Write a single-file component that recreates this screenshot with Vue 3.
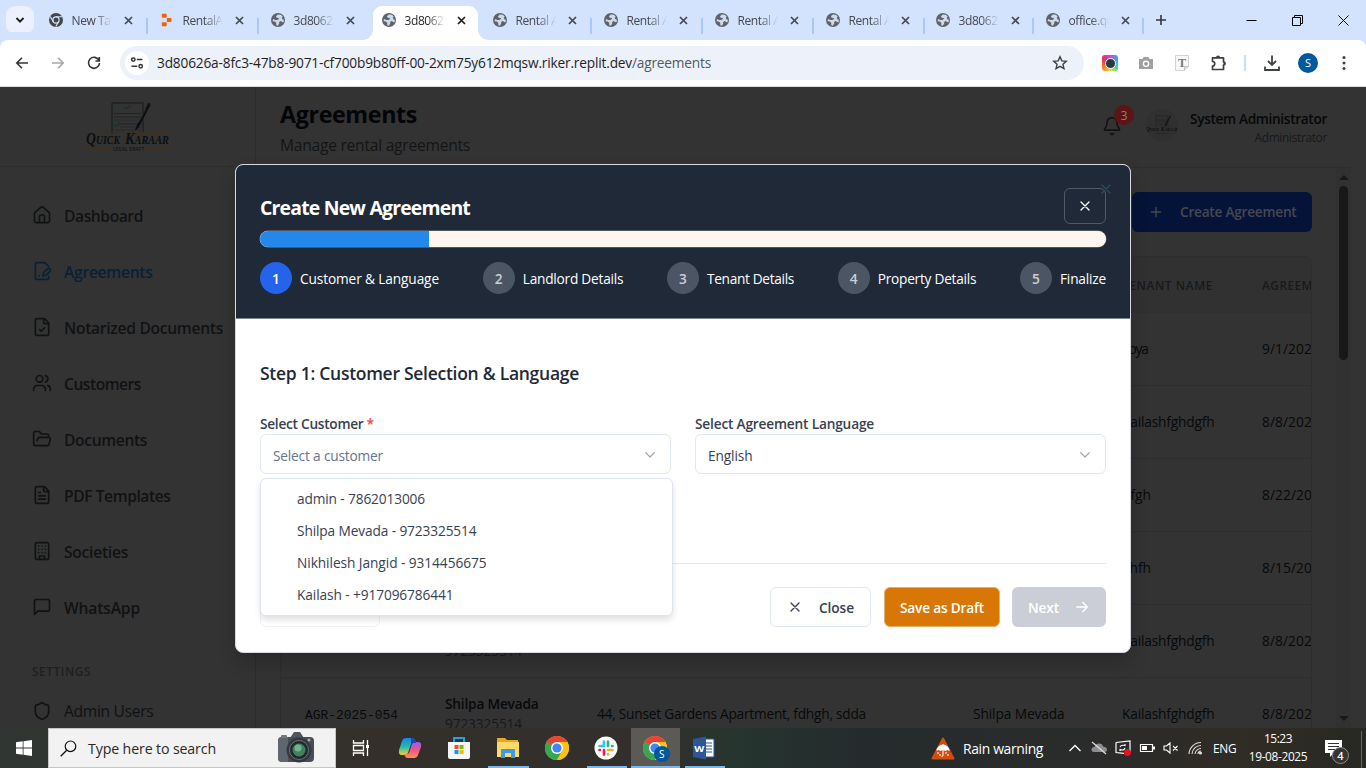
<script setup>
const vFit = {
  mounted(el, { value }) {
    const natural = el.getBoundingClientRect().width
    el.style.letterSpacing = (value - natural) / el.textContent.length + 'px'
  }
}

const tabs = [
  { title: 'New Tab', icon: 'chrome' },
  { title: 'RentalAg', icon: 'replit' },
  { title: '3d80626', icon: 'globe', noSep: true },
  { title: '3d80626', icon: 'globe', active: true, noSep: true },
  { title: 'Rental Ag', icon: 'globe' },
  { title: 'Rental Ag', icon: 'globe' },
  { title: 'Rental Ag', icon: 'globe' },
  { title: 'Rental Ag', icon: 'globe' },
  { title: '3d80626', icon: 'globe', narrow: true },
  { title: 'office.qu', icon: 'globe', narrow: true }
]

const nav = [
  { label: 'Dashboard', w: 79, paths: ['M3 10.5V19a2.200 2.200 0 0 0 2.200 2.200h13.600A2.200 2.200 0 0 0 21 19v-8.500a2.500 2.500 0 0 0-.9-1.900L13.500 2.800a2.300 2.300 0 0 0-3 0L3.900 8.600a2.500 2.500 0 0 0-.9 1.900z', 'M9 21v-8a1 1 0 0 1 1-1h4a1 1 0 0 1 1 1v8'] },
  { label: 'Agreements', w: 88.500, active: true, paths: ['M20 18.500V20a2 2 0 0 1-2 2H6a2 2 0 0 1-2-2V4a2 2 0 0 1 2-2h9.500L20 6.500', 'M8 18h1', 'm18.400 9.600a2 2 0 0 1 3 3L17 17l-4 1 1-4z'] },
  { label: 'Notarized Documents', w: 159, paths: ['M15 2H6a2 2 0 0 0-2 2v16a2 2 0 0 0 2 2h12a2 2 0 0 0 2-2V7z', 'M14 2v4a2 2 0 0 0 2 2h4', 'm9 15 2 2 4-4'] },
  { label: 'Customers', w: 77, paths: ['M16 21v-2a4 4 0 0 0-4-4H6a4 4 0 0 0-4 4v2', 'M9 3a4 4 0 1 0 0 8 4 4 0 0 0 0-8', 'M22 21v-2a4 4 0 0 0-3-3.870', 'M16 3.130a4 4 0 0 1 0 7.750'] },
  { label: 'Documents', w: 83, paths: ['m6 14 1.500-2.900A2 2 0 0 1 9.240 10H20a2 2 0 0 1 1.940 2.500l-1.540 6a2 2 0 0 1-1.950 1.500H4a2 2 0 0 1-2-2V5a2 2 0 0 1 2-2h3.900a2 2 0 0 1 1.690.900l.810 1.200a2 2 0 0 0 1.670.900H18a2 2 0 0 1 2 2v2'] },
  { label: 'PDF Templates', w: 106.500, paths: ['M15 2H6a2 2 0 0 0-2 2v16a2 2 0 0 0 2 2h12a2 2 0 0 0 2-2V7z', 'M14 2v4a2 2 0 0 0 2 2h4', 'M10 9H8', 'M16 13H8', 'M16 17H8'] },
  { label: 'Societies', w: 64, paths: ['M6 2h12a2 2 0 0 1 2 2v16a2 2 0 0 1-2 2H6a2 2 0 0 1-2-2V4a2 2 0 0 1 2-2z', 'M9 22v-4h6v4', 'M8 6h.01M12 6h.01M16 6h.01M8 10h.01M12 10h.01M16 10h.01M8 14h.01M12 14h.01M16 14h.01'] },
  { label: 'WhatsApp', w: 76, paths: ['M21 15a2 2 0 0 1-2 2H7l-4 4V5a2 2 0 0 1 2-2h14a2 2 0 0 1 2 2z'] }
]

const rows = [
  { tenant: 'Zoya', w: 25.500, date: '9/1/2025' },
  { tenant: 'Kailashfghdgfh', w: 92.500, date: '8/8/2025' },
  { tenant: 'dfgh', w: 29, date: '8/22/2025' },
  { tenant: 'ghfh', w: 29, date: '8/15/2025' },
  { tenant: 'Kailashfghdgfh', w: 92.500, date: '8/8/2025', phone: '9723325514' },
  { tenant: 'Kailashfghdgfh', w: 92.500, date: '8/8/2025', phone: '9723325514', id: 'AGR-2025-054', customer: 'Shilpa Mevada', address: '44, Sunset Gardens Apartment, fdhgh, sdda', landlord: 'Shilpa Mevada' }
]

const steps = [
  { label: 'Customer & Language', w: 139 },
  { label: 'Landlord Details', w: 100.500 },
  { label: 'Tenant Details', w: 87 },
  { label: 'Property Details', w: 98.500 },
  { label: 'Finalize', w: 46 }
]

const customers = [
  { label: 'admin - 7862013006', w: 128 },
  { label: 'Shilpa Mevada - 9723325514', w: 179.500 },
  { label: 'Nikhilesh Jangid - 9314456675', w: 189.500 },
  { label: 'Kailash - +917096786441', w: 156.500 }
]
</script>

<template>
  <div class="screen">
    <svg class="defs" width="0" height="0" aria-hidden="true">
      <symbol id="globe" viewBox="0 0 14 14">
        <circle cx="7" cy="7" r="7" fill="#5f6368" />
        <path d="M6.700 1.400 4.900 3.600l.9 1.200 1.900.1.300 1.200-1.900.9H4.300L2.200 6 1.500 8.200l2.300.2 1.400 1.400.1 2.500 1.500.4 1.500-2.200-.2-1.500 1.600-1 1.900 1.200 1.100-.3.100-2.200-1.400-.4-.6-1.500.9-1.300-1.900-1.700z" fill="#d9e5fb" opacity=".9" />
      </symbol>
      <symbol id="x" viewBox="0 0 24 24"><path d="M18 6 6 18M6 6l12 12" fill="none" stroke="currentColor" stroke-width="2" stroke-linecap="round" /></symbol>
      <symbol id="logo" viewBox="0 0 84 50">
        <path d="M26 32V1h31v30" fill="none" stroke="#17191b" stroke-width="1" />
        <path d="M28 11.500h27M28 15h27M34 22h21" stroke="#202224" stroke-width="1.200" />
        <path d="M28 18h27M34 25h21M28 28h27" stroke="#2a2b2c" stroke-width="1" />
        <path d="m38 5 2 2 4-3.500M28 22.500l2 2 4-4" fill="none" stroke="#17361d" stroke-width="1.300" />
        <path d="M63 1 51 24l-1.500 4 3-3L64 3z" fill="#080d14" stroke="#0b1018" stroke-width="1" />
        <path d="m60 7-7 13" stroke="#392b19" stroke-width=".8" />
        <path d="M12 30h37M51 30.500h33M0 46.500h25M60 46.500h24" stroke="#3d301e" stroke-width="1" />
        <text x="0" y="42" textLength="34" lengthAdjust="spacingAndGlyphs" class="brand"><tspan font-size="16">Q</tspan><tspan font-size="11.500">UICK</tspan></text>
        <text x="39" y="42" textLength="44" lengthAdjust="spacingAndGlyphs" class="brand"><tspan font-size="16">K</tspan><tspan font-size="11.500">ARAAR</tspan></text>
        <text x="27" y="48.500" textLength="31" class="brand-sub">LEGAL DRAFT</text>
      </symbol>
      <symbol id="chrome" viewBox="0 0 24 24">
        <circle cx="12" cy="12" r="12" fill="#fbc116" />
        <path d="M12 12 1.600 6A12 12 0 0 1 22.400 6H12z" fill="#ea4335" />
        <path d="M1.600 6A12 12 0 0 0 12 24l5.200-9L12 12 6.800 15z" fill="#34a853" />
        <path d="M1.600 6 6.800 15 12 12V6z" fill="#ea4335" />
        <path d="M1.600 6 6.800 15l3-2-3-5z" fill="#34a853" />
        <path d="M22.400 6A12 12 0 0 1 12 24l5.200-9V6z" fill="#fbc116" />
        <circle cx="12" cy="12" r="6" fill="#fff" /><circle cx="12" cy="12" r="4.600" fill="#4285f4" />
      </symbol>
    </svg>

    <div class="tabstrip">
      <div class="tab-search"><svg width="10" height="10" viewBox="0 0 10 10"><path d="m1.500 3 3.500 3.700L8.500 3" fill="none" stroke="#1f1f1f" stroke-width="1.900" /></svg></div>
      <div v-for="(t, i) in tabs" :key="i" class="tab" :class="{ active: t.active, narrow: t.narrow }">
        <svg v-if="t.icon === 'globe'" width="14" height="14"><use href="#globe" /></svg>
        <svg v-else-if="t.icon === 'chrome'" width="14" height="14" viewBox="0 0 14 14"><circle cx="7" cy="7" r="7" fill="#444746" /><circle cx="7" cy="7" r="3.100" fill="#444746" stroke="#d3e2fd" stroke-width="1.200" /><path d="M7 3.800h6M4.200 8.600 1.200 3.500M9.700 8.600 6.800 13.500" stroke="#d3e2fd" stroke-width="1.100" /></svg>
        <svg v-else width="14" height="14" viewBox="0 0 14 14"><path d="M2.500 1.500H6V4H2.500zM2.500 10H6v2.500H2.500zM7.500 5.700h3.300v2.600H7.500z" fill="#f26207" stroke="#f26207" stroke-width="1.400" stroke-linejoin="round" /></svg>
        <span class="tab-title">{{ t.title }}</span>
        <svg class="tab-x" width="9" height="9" viewBox="0 0 9 9"><path d="m1 1 7 7M8 1 1 8" stroke="currentColor" stroke-width="1.700" /></svg>
        <i v-if="!t.noSep" class="tab-sep" />
      </div>
      <svg class="new-tab" width="12" height="12" viewBox="0 0 12 12"><path d="M6 1v10M1 6h10" stroke="#333638" stroke-width="1.600" /></svg>
      <div class="window-buttons">
        <svg width="11" height="11" viewBox="0 0 11 11"><path d="M.5 5.500h10" stroke="#000" /></svg>
        <svg width="11" height="11" viewBox="0 0 11 11"><path d="M.5 2.500h8v8h-8zM2.500 2.500v-2h8v8h-2" fill="none" stroke="#000" /></svg>
        <svg width="11" height="11" viewBox="0 0 11 11"><path d="m.5.5 10 10m0-10-10 10" stroke="#000" /></svg>
      </div>
    </div>

    <div class="toolbar">
      <svg class="tb" width="16" height="16" viewBox="0 0 16 16"><path d="M14 8H3M8 2.800 2.800 8 8 13.200" fill="none" stroke="#333638" stroke-width="1.600" /></svg>
      <svg class="tb" width="16" height="16" viewBox="0 0 16 16"><path d="M2 8h11M8 2.800 13.200 8 8 13.200" fill="none" stroke="#a6a8aa" stroke-width="1.600" /></svg>
      <svg class="tb" width="16" height="16" viewBox="0 0 16 16"><path d="M13 5.500A5.500 5.500 0 1 0 13.500 8M13.300 2v4H9.500" fill="none" stroke="#333638" stroke-width="1.600" /></svg>
      <div class="omnibox">
        <span class="site-info"><svg width="14" height="14" viewBox="0 0 14 14" fill="none" stroke="#333638" stroke-width="1.500"><circle cx="3.300" cy="3.600" r="1.700" /><path d="M6.800 3.600h5.700M1.500 10.300h5.700" /><circle cx="10.700" cy="10.300" r="1.700" /></svg></span>
        <span v-fit="475" class="fit url">3d80626a-8fc3-47b8-9071-cf700b9b80ff-00-2xm75y612mqsw.riker.replit.dev</span><span v-fit="79" class="fit url path">/agreements</span>
        <svg class="star" width="16" height="16" viewBox="0 0 16 16"><path d="m8 1.800 1.850 4.100 4.450.4-3.350 3 1 4.400L8 11.400l-3.950 2.300 1-4.400-3.350-3 4.450-.4z" fill="none" stroke="#3c4043" stroke-width="1.400" /></svg>
      </div>
      <div class="extensions">
        <span class="rainbow"><i /></span>
        <svg width="16" height="16" viewBox="0 0 16 16"><path d="M1 4h3.500l1.200-2h4.600l1.200 2H15v10H1z" fill="#a0a0a0" /><circle cx="8" cy="8.800" r="3.300" fill="#fff" /><circle cx="8" cy="8.800" r="1.900" fill="#999" /></svg>
        <svg width="16" height="16" viewBox="0 0 16 16"><path d="M1.500.5h13v11l-4 4h-9z" fill="#f7f7f7" stroke="#d2d2d2" /><path d="M10.500 15.500v-4h4" fill="#ddd" stroke="#c4c4c4" /><text x="8" y="12" text-anchor="middle" class="t-glyph">T</text></svg>
        <svg width="18" height="18" viewBox="0 0 18 18"><path d="M2.500 3.800h11V8a1.500 1.500 0 0 1 0 3v4.500h-11V12a2 2 0 0 0 0-4.500z" fill="none" stroke="#3c4043" stroke-width="1.700" stroke-linejoin="round" /><path d="M6 3.500a2 2 0 0 1 4 0M13.500 7.500a2 2 0 0 1 0 4" fill="#3c4043" /></svg>
      </div>
      <i class="tb-sep" />
      <svg class="dl" width="16" height="16" viewBox="0 0 16 16"><path d="M8 .5v9M4 6l4 4 4-4M1 11.500V15h14v-3.500" fill="none" stroke="#3c4043" stroke-width="1.800" /></svg>
      <span class="profile">S</span>
      <svg class="dots" width="4" height="16" viewBox="0 0 4 16" fill="#3c4043"><circle cx="2" cy="2.500" r="1.500" /><circle cx="2" cy="8" r="1.500" /><circle cx="2" cy="13.500" r="1.500" /></svg>
    </div>

    <div class="page">
      <aside class="sidebar">
        <div class="brand-box"><svg width="84" height="50"><use href="#logo" /></svg></div>
        <nav>
          <a v-for="n in nav" :key="n.label" :class="{ active: n.active }">
            <svg width="20" height="20" viewBox="0 0 24 24"><path v-for="(p, i) in n.paths" :key="i" :d="p" /></svg>
            <span v-fit="n.w" class="fit">{{ n.label }}</span>
          </a>
        </nav>
        <div class="section"><span v-fit="59" class="fit">SETTINGS</span></div>
        <a class="admin"><svg width="20" height="20" viewBox="0 0 24 24"><path d="M20 13c0 5-3.500 7.500-7.660 8.950a1 1 0 0 1-.67-.01C7.500 20.500 4 18 4 13V6a1 1 0 0 1 1-1c2 0 4.500-1.200 6.240-2.720a1.170 1.170 0 0 1 1.520 0C14.510 3.810 17 5 19 5a1 1 0 0 1 1 1z" /></svg><span v-fit="89.500" class="fit">Admin Users</span></a>
      </aside>

      <div class="main">
        <header class="topbar">
          <div class="titles"><h1 v-fit="137" class="fit">Agreements</h1><p v-fit="190" class="fit">Manage rental agreements</p></div>
          <div class="bell">
            <svg width="20" height="20" viewBox="0 0 24 24"><path d="M10.270 21a2 2 0 0 0 3.460 0M3.260 15.330A1 1 0 0 0 4 17h16a1 1 0 0 0 .74-1.670C19.410 13.960 18 12.500 18 8A6 6 0 0 0 6 8c0 4.500-1.410 5.960-2.740 7.330" /></svg>
            <b>3</b>
          </div>
          <div class="avatar"><svg width="32" height="20"><use href="#logo" /></svg></div>
          <div class="user"><strong v-fit="137" class="fit">System Administrator</strong><span v-fit="72.500" class="fit">Administrator</span></div>
        </header>
        <div class="content">
          <div class="actions"><button class="create"><svg width="16" height="16" viewBox="0 0 24 24"><path d="M5 12h14M12 5v14" /></svg><span v-fit="116.500" class="fit">Create Agreement</span></button></div>
          <div class="table">
            <div class="tr th"><span /><span /><span /><span /><span v-fit="91" class="fit">TENANT NAME</span><span v-fit="75" class="fit">AGREEMENT</span></div>
            <div v-for="(r, i) in rows" :key="i" class="tr">
              <span><span v-if="r.id" v-fit="93" class="fit mono">{{ r.id }}</span></span>
              <span class="cust"><strong v-if="r.customer" v-fit="93.500" class="fit">{{ r.customer }}</strong><span v-if="r.phone" v-fit="77" class="fit phone">{{ r.phone }}</span></span>
              <span><span v-if="r.address" v-fit="269" class="fit">{{ r.address }}</span></span>
              <span><span v-if="r.landlord" v-fit="91.500" class="fit">{{ r.landlord }}</span></span>
              <span v-fit="r.w" class="fit">{{ r.tenant }}</span>
              <span class="fit date">{{ r.date }}</span>
            </div>
          </div>
        </div>
        <div class="scrollbar"><i class="up" /><i class="thumb" /><i class="down" /></div>
      </div>
    </div>

    <section class="modal">
      <div class="modal-head">
        <div class="modal-title"><h2 v-fit="210" class="fit">Create New Agreement</h2><button><svg width="16" height="16"><use href="#x" /></svg></button></div>
        <div class="progress"><i /></div>
        <div class="steps">
          <div v-for="(s, i) in steps" :key="i" class="step" :class="{ current: i === 0 }"><b>{{ i + 1 }}</b><span v-fit="s.w" class="fit">{{ s.label }}</span></div>
        </div>
        <svg class="ghost-x" width="16" height="16"><use href="#x" /></svg>
      </div>
      <div class="modal-body">
        <h3 v-fit="319" class="fit">Step 1: Customer Selection &amp; Language</h3>
        <div class="fields">
          <div class="field">
            <label><span v-fit="103.500" class="fit">Select Customer</span><em>*</em></label>
            <div class="select placeholder"><span v-fit="110" class="fit">Select a customer</span><svg width="16" height="16" viewBox="0 0 24 24"><path d="m5.500 8.500 6.500 6.500 6.500-6.500" /></svg></div>
            <ul class="menu"><li v-for="c in customers" :key="c.label"><span v-fit="c.w" class="fit">{{ c.label }}</span></li></ul>
          </div>
          <div class="field">
            <label><span v-fit="179" class="fit">Select Agreement Language</span></label>
            <div class="select"><span v-fit="44.500" class="fit">English</span><svg width="16" height="16" viewBox="0 0 24 24"><path d="m5.500 8.500 6.500 6.500 6.500-6.500" /></svg></div>
          </div>
        </div>
        <footer>
          <button class="prev" />
          <button class="close"><svg width="16" height="16"><use href="#x" /></svg><span v-fit="35" class="fit">Close</span></button>
          <button class="save"><span v-fit="84" class="fit">Save as Draft</span></button>
          <button class="next"><span v-fit="31" class="fit">Next</span><svg width="16" height="16" viewBox="0 0 24 24"><path d="M4 12h16M13 5l7 7-7 7" /></svg></button>
        </footer>
      </div>
    </section>

    <div class="taskbar">
      <div class="start"><svg width="16" height="16" viewBox="0 0 16 16"><path d="M0 2.200 6.700 1.300v6.300H0zM7.500 1.200 16 0v7.600H7.500zM0 8.400h6.700v6.300L0 13.800zM7.500 8.400H16V16l-8.500-1.200z" fill="#fff" /></svg></div>
      <div class="search">
        <svg width="17" height="17" viewBox="0 0 17 17"><circle cx="10.500" cy="6.300" r="5.300" fill="none" stroke="#111" stroke-width="1.200" /><path d="m6.700 10.200-6 6" stroke="#111" stroke-width="1.300" /></svg>
        <span v-fit="128" class="fit">Type here to search</span>
        <svg class="camera" width="38" height="34" viewBox="0 0 38 34"><path d="M13 7 17 1h6l4 6z" fill="#50565c" /><rect x="1" y="6" width="36" height="25" rx="4" fill="#484e54" /><path d="M1 10q0-4 4-4h6v25H5q-4 0-4-4z" fill="#5f666d" /><rect x="4" y="4" width="6" height="3" rx="1" fill="#777" /><circle cx="22" cy="19" r="12.500" fill="#343a3f" /><circle cx="22" cy="19" r="9.500" fill="#23292b" stroke="#697176" /><circle cx="22" cy="19" r="6.500" fill="#408260" /><circle cx="21" cy="17" r="3.500" fill="#70b58a" /><circle cx="32" cy="9" r="1.500" fill="#aaa" /></svg>
      </div>
      <div class="apps">
        <span><svg width="18" height="18" viewBox="0 0 18 18" fill="none" stroke="#fff" stroke-width="1.300"><path d="M1.500 1v3h10V1M1.500 17v-3h10v3M1.500 6.500h10v5h-10zM15.500 1v16" /><path d="M14 6h3v3h-3z" fill="#fff" stroke="none" /></svg></span>
        <span><svg width="24" height="24" viewBox="0 0 24 24"><defs><linearGradient id="cpA" x2="0" y2="1"><stop stop-color="#1c83e8" /><stop offset=".5" stop-color="#20b9b0" /><stop offset="1" stop-color="#f4d12c" /></linearGradient><linearGradient id="cpB" x2="0" y2="1"><stop stop-color="#9b5af0" /><stop offset=".5" stop-color="#ee568a" /><stop offset="1" stop-color="#ff914a" /></linearGradient></defs><path d="M8 2h6q3 0 4 5h-3q-2 0-3 4l-2 6q-1 2-3 2H4q-4 0-3-5L4 5q1-3 4-3z" fill="url(#cpA)" /><path d="M16 22h-6q-3 0-4-4h3q2 0 3-4l2-6q1-2 3-2h3q4 0 3 5l-3 8q-1 3-4 3z" fill="url(#cpB)" /><path d="M13 2h1q3 0 4 5h-3l-2 2z" fill="#1649b5" /></svg></span>
        <span><svg width="24" height="24" viewBox="0 0 24 24"><path d="M7 7V2h10v5" fill="none" stroke="#1ba4e8" stroke-width="2" /><path d="M1 6h22v15q0 2-2 2H3q-2 0-2-2z" fill="#f4f6f8" /><path d="M7.500 9h4v4h-4z" fill="#f05022" /><path d="M12.500 9h4v4h-4z" fill="#7fba00" /><path d="M7.500 14h4v4h-4z" fill="#00a4ef" /><path d="M12.500 14h4v4h-4z" fill="#ffb900" /></svg></span>
        <span class="open"><svg width="24" height="24" viewBox="0 0 24 24"><path d="M1 2h8l2 2h11v17H1z" fill="#e9a820" /><path d="M1 6h22v15H1z" fill="#ffd968" /><path d="M5 13h14v9h-4v-5H9v5H5z" fill="#3b9be8" /></svg></span>
        <span><svg width="24" height="24"><use href="#chrome" /></svg></span>
        <span class="open"><svg width="24" height="24" viewBox="0 0 24 24"><circle cx="12" cy="12" r="11.500" fill="#fff" /><g fill="none" stroke-width="2.700" stroke-linecap="round"><path d="M10 5.500V10M5.500 10H10" stroke="#36c5f0" /><path d="M14 5.500V10M18.500 10h-.5" stroke="#2eb67d" /><path d="M14 14h4.500M14 18.500v-.5" stroke="#ecb22e" /><path d="M10 14v4.500M5.500 14h.5" stroke="#e01e5a" /></g></svg></span>
        <span class="open focused"><svg width="24" height="24"><use href="#chrome" /></svg><b>S</b></span>
        <span class="open"><svg width="24" height="24" viewBox="0 0 24 24"><path d="M12 3h10v18H12z" fill="#f7f9fc" stroke="#2b579a" /><path d="M14 7h6M14 10h6M14 13h6M14 16h6" stroke="#2b579a" stroke-width="1.200" /><path d="m1 3 13-2.500v23L1 21z" fill="#2b579a" /><text x="2.200" y="15.500" font-size="9.500" font-weight="700" fill="#fff" font-family="Open Sans, sans-serif" textLength="10" lengthAdjust="spacingAndGlyphs">W</text></svg></span>
      </div>
      <div class="weather"><svg width="24" height="23" viewBox="0 0 24 23"><path d="M12 1.500 22.500 21.500h-21z" fill="#cf4f12" stroke="#cf4f12" stroke-width="2" stroke-linejoin="round" /><path d="M5.500 14a6.500 6.500 0 0 1 13 0l-2-1-2 1-2.500-1-2.500 1-2-1z" fill="#fff" /><path d="M12 7v11q0 1.500-1.500 1.500M7 15v2M9 17v2M15 15v2M17 17v2" fill="none" stroke="#fff" /></svg><span v-fit="80" class="fit">Rain warning</span></div>
      <div class="tray">
        <svg viewBox="0 0 18 16"><path d="m3.500 11 5.500-5.500 5.500 5.500" fill="none" stroke="#fff" stroke-width="1.300" /></svg>
        <svg viewBox="0 0 18 16"><path d="M4 12q-3-.5-2.500-3 .5-2 3-2 1-3.500 4.500-3.500T13 6.500q4 .5 4 3t-3 2.500z" fill="#8b8d8f" /><path d="M2 2l14 12" stroke="#ddd" stroke-width="1.300" /></svg>
        <svg viewBox="0 0 18 16"><path d="M2 2.500 16 1v11.500M2 2.500v10l8 .8" fill="none" stroke="#fff" stroke-width="1.200" /><path d="M6 7q1-2.500 5-1.500V4M11 8q-1 3-5 1.500V11" fill="none" stroke="#fff" stroke-width="1.100" /><circle cx="13.500" cy="12.500" r="3.500" fill="#e81123" /></svg>
        <svg viewBox="0 0 18 16"><path d="M2.500 4.500h12v7h-12z" fill="none" stroke="#fff" stroke-width="1.200" /><path d="M4 6h5v4H4zM15 6.500h2v3h-2z" fill="#fff" /></svg>
        <svg viewBox="0 0 18 16"><path d="M2 6h2.500L8 3v10L4.500 10H2zM11 6l4.500 4.500M15.500 6 11 10.500" fill="none" stroke="#fff" stroke-width="1.100" /></svg>
        <svg viewBox="0 0 18 16" fill="none" stroke="#ddd" stroke-width="1.100"><path d="M3 14A12 12 0 0 1 15 2.500M6 14A9 9 0 0 1 15 5.500M9 14a6 6 0 0 1 6-5.500M12 14a3 3 0 0 1 3-3" /><circle cx="14.500" cy="13" r="1" fill="#fff" /></svg>
      </div>
      <div class="lang"><span v-fit="23.500" class="fit">ENG</span></div>
      <div class="clock"><span v-fit="28" class="fit">15:23</span><span v-fit="58.500" class="fit">19-08-2025</span></div>
      <div class="notify"><svg width="17" height="17" viewBox="0 0 17 17"><path d="M0 0h17v13H9l-4 4v-4H0z" fill="#fff" /><path d="M3 3.500h11M3 6.500h11M3 9.500h7" stroke="#333" stroke-width="1.100" /></svg><b>4</b></div>
      <i class="peek" />
    </div>
  </div>
</template>

<style>
html, body { margin: 0; overflow: hidden; }
</style>

<style scoped>
* { box-sizing: border-box; }
.screen { position: relative; width: 1366px; height: 768px; display: flex; flex-direction: column; overflow: hidden; background: #333; font-family: "Open Sans", "Noto Sans", sans-serif; font-size: 13.700px; }
.defs { position: absolute; }
svg { display: block; flex: none; }
i { font-style: normal; display: block; }
button { font: inherit; color: inherit; padding: 0; margin: 0; border: 0; background: none; display: flex; align-items: center; }
h1, h2, h3, p, ul { margin: 0; padding: 0; list-style: none; }
.fit { display: inline-block; white-space: nowrap; flex: none; align-self: center; }

.tabstrip { height: 40px; flex: none; display: flex; align-items: center; background: #d3e2fd; }
.tab-search { width: 28px; height: 28px; margin: 0 3px 0 6px; border-radius: 9px; background: #ebf1fe; display: grid; place-items: center; }
.tab { position: relative; width: 111px; height: 34px; align-self: flex-end; padding: 0 0 0 11.500px; display: flex; align-items: center; color: #45494e; }
.tab > * { margin-top: -6px; }
.tab.narrow { width: 110px; left: -1px; }
.tab-title { width: 40px; margin-left: 9px; overflow: hidden; white-space: nowrap; font-size: 12px; letter-spacing: -.4px; mask-image: linear-gradient(90deg, #000 55%, transparent); }
.tab-x { margin-left: 12.500px; }
.tab-sep { position: absolute; right: 0; top: 12px; width: 2px; height: 16px; margin: 0; background: #a8c7fa; }
.tab.active { color: #1f1f1f; z-index: 1; }
.tab.active::before { content: ""; position: absolute; left: 2.500px; right: 3px; top: 0; height: 34px; margin: 0; border-radius: 9px 9px 0 0; background: #fff; z-index: -1; }
.tab.active::after { content: ""; position: absolute; left: -7.500px; right: -7px; bottom: 0; height: 10px; z-index: -1; background: radial-gradient(circle at 0 0, transparent 9.500px, #fff 10px) left / 10px 10px no-repeat, radial-gradient(circle at 100% 0, transparent 9.500px, #fff 10px) right / 10px 10px no-repeat; }
.new-tab { margin-left: 10px; }
.window-buttons { margin-left: auto; margin-right: 17.500px; display: flex; gap: 35px; }

.toolbar { height: 46px; flex: none; display: flex; align-items: center; background: #fff; padding-left: 14px; border-radius: 8px 8px 0 0; box-shadow: 0 -8px 0 #d3e2fd; }
.tb { margin-right: 20px; }
.omnibox { width: 964px; height: 34px; margin-left: -2px; border-radius: 17px; background: #ecf1fa; display: flex; align-items: center; padding-left: 5px; }
.site-info { width: 24px; height: 24px; border-radius: 50%; background: #fff; display: grid; place-items: center; margin-right: 8px; }
.url { color: #1f1f1f; margin-top: -1px; }
.path { color: #55595e; }
.star { margin-left: auto; margin-right: 16px; }
.extensions { display: flex; align-items: center; margin-left: 18px; gap: 20px; }
.rainbow { width: 16px; height: 16px; border-radius: 3px; display: grid; place-items: center; background: conic-gradient(#d346d8, #36a5f4, #39dd91, #e9db3a, #f57820, #e52f65, #d346d8); }
.rainbow i { width: 11px; height: 11px; border-radius: 50%; background: #283747; border: 1.500px solid #fff; }
.t-glyph { font: 700 12px "Liberation Serif", serif; fill: #777; }
.tb-sep { width: 2px; height: 16px; margin: 0 18px 0 16px; background: #c9dcfb; }
.profile { width: 20px; height: 20px; margin: 0 24px 0 18px; border-radius: 50%; background: #00599c; color: #fff; font-size: 11px; line-height: 20px; text-align: center; }

.page { height: 642px; flex: none; display: flex; border-top: 1px solid #dadcdf; background: #333; color: #101214; }
.sidebar { width: 256px; flex: none; border-right: 1px solid #2d2d2e; overflow: hidden; }
nav svg, .admin svg, .bell svg, .create svg, .select svg, .next svg { fill: none; stroke: currentColor; stroke-width: 2; stroke-linecap: round; stroke-linejoin: round; }
.brand-box { height: 80px; padding-left: 86px; display: flex; align-items: center; border-bottom: 1px solid #2c2d2e; }
.brand { font-family: "Liberation Serif", serif; font-style: italic; font-weight: 700; fill: #0d0e0f; }
.brand-sub { font-family: "Open Sans", sans-serif; font-size: 4.500px; font-weight: 700; fill: #17191a; }
nav { padding-top: 20px; }
nav a { height: 56px; padding-left: 32px; display: flex; align-items: center; gap: 12px; font-size: 15.600px; font-weight: 600; }
nav a.active { color: #0a2035; }
nav .fit { padding-top: 1px; }
.section { height: 44px; margin-top: 14px; padding-left: 32px; font-size: 11.900px; font-weight: 600; color: #1d1f21; display: flex; align-items: center; }
.admin { height: 36px; display: flex; align-items: center; gap: 12px; padding-left: 32px; font-size: 15.600px; }

.main { flex: none; width: 1095px; display: grid; grid-template: 81px 560px / 1080px 15px; }
.topbar { grid-column: 1 / 3; border-bottom: 1px solid #2c2d2e; padding-left: 24px; display: flex; align-items: flex-start; }
.titles { display: flex; flex-direction: column; align-items: flex-start; width: 822px; }
.titles .fit { align-self: flex-start; }
h1 { font-size: 23.200px; line-height: 32px; margin-top: 11px; color: #030508; font-weight: 700; }
p { font-size: 15.600px; line-height: 24px; margin-top: 3px; color: #131517; }
.bell { position: relative; margin-top: 29px; width: 20px; color: #101214; }
.bell b { position: absolute; left: 12px; top: -11px; width: 20px; height: 20px; border-radius: 50%; background: #5d1414; color: #858585; font-size: 11.800px; font-weight: 400; line-height: 20px; text-align: center; }
.avatar { width: 32px; height: 32px; margin: 22px 12px 0 24px; border-radius: 50%; background: #303030; overflow: hidden; display: grid; place-items: center; }
.user { width: 137px; padding-top: 22px; display: flex; flex-direction: column; }
.user .fit { align-self: flex-end; line-height: 20px; }
.user strong { font-weight: 600; color: #060809; }
.user .fit + .fit { font-size: 11.900px; line-height: 16px; color: #17191b; }
.content { padding: 24px 24px 0; overflow: hidden; }
.actions { display: flex; justify-content: flex-end; }
.create { width: 180px; height: 40px; border-radius: 6px; padding-left: 16px; gap: 16px; background: #051338; color: #45484e; font-weight: 600; }
.create .fit { padding-bottom: 1px; }
.table { margin-top: 24px; width: 1032px; height: 500px; border: 1px solid #2d2e2f; border-radius: 8px; overflow: hidden; }
.tr { height: 73px; display: grid; grid-template-columns: 140px 152px 376px 149px 140px 100px; align-items: center; padding: 0 0 1px 24px; border-bottom: 1px solid #2c2d2e; color: #07090b; }
.tr > .fit { justify-self: start; }
.th { height: 56px; padding-top: 1px; background: #313132; border-color: #303031; color: #17191b; font-size: 11.900px; font-weight: 600; }
.mono { font-family: "Liberation Mono", monospace; font-size: 12.800px; }
.cust { display: flex; flex-direction: column; justify-content: flex-end; height: 40px; }
.cust .fit { align-self: flex-start; line-height: 20px; }
.cust strong { font-weight: 600; }
.phone { color: #17191b; }
.date { letter-spacing: .1px; }
.scrollbar { background: #313131; display: flex; flex-direction: column; align-items: center; padding-top: 7px; }
.up, .down { width: 0; height: 0; border: 5px solid transparent; border-top: 0; border-bottom: 5px solid #181818; }
.thumb { width: 9px; height: 174px; margin-top: 6px; border-radius: 5px; background: #181818; }
.down { border-bottom: 0; border-top: 5px solid #181818; margin-top: 356px; }

.modal { position: absolute; left: 235px; top: 163.500px; width: 896px; height: 489px; border: 1px solid #d7dbe1; border-radius: 8px; background: #fff; box-shadow: 0 10px 18px rgba(0,0,0,.18); }
.modal-head { position: relative; height: 154.500px; padding: 23.500px 24px 0; background: #1f2937; border-radius: 7px 7px 0 0; border-bottom: 1px solid #7d848e; color: #fff; }
.modal-title { height: 36px; display: flex; justify-content: space-between; }
h2 { font-size: 19.400px; font-weight: 700; line-height: 26px; padding-top: 3px; }
.modal-title button { width: 42px; height: 36px; border: 1px solid #505a66; border-radius: 6px; justify-content: center; }
.ghost-x { position: absolute; right: 16px; top: 16px; color: #34485d; }
.progress { height: 16px; margin-top: 6.500px; border-radius: 8px; background: #fff5ef; overflow: hidden; box-shadow: 0 0 0 .5px #7a828c; }
.progress i { width: 20%; height: 100%; background: #2487eb; }
.steps { display: flex; justify-content: space-between; margin-top: 15.500px; }
.step { display: flex; align-items: center; gap: 8px; font-weight: 500; }
.step b { width: 32px; height: 32px; border-radius: 50%; background: #4b5563; color: #ccd0d6; display: grid; place-items: center; font-weight: 600; }
.step.current b { background: #2563eb; color: #fff; }
.modal-body { padding: 40px 24px 0; color: #374151; }
h3 { font-size: 17.500px; line-height: 28px; font-weight: 600; color: #1f2937; }
.fields { display: grid; grid-template-columns: 411px 411px; gap: 24px; margin-top: 27px; }
.field { position: relative; }
label { display: flex; height: 20px; align-items: center; gap: 3px; font-weight: 600; padding-bottom: 1px; }
em { color: #ef4444; font-style: normal; }
.select { height: 40px; border: 1px solid #e2e8f0; border-radius: 6px; padding: 1px 12px 0; display: flex; align-items: center; justify-content: space-between; }
.select svg { color: #9ca3af; stroke-width: 1.800; }
.select .fit { padding-top: 1px; }
.placeholder { color: #64748b; }
.menu { position: absolute; z-index: 2; left: 0; top: 63.500px; width: 413px; height: 138.500px; padding: 4px 5px; border: 1px solid #dfe5ed; border-radius: 6px; background: #fff; box-shadow: 0 4px 6px rgba(0,0,0,.12); }
.menu li { height: 32px; padding-left: 31px; display: flex; align-items: center; }
footer { display: flex; align-items: flex-start; margin-top: 88.500px; border-top: 1px solid #e5e7eb; padding-top: 23.500px; font-weight: 600; }
footer button { height: 40px; border-radius: 6px; }
.prev { width: 120px; border: 1px solid #f0f2f6; margin-right: auto; }
.close { width: 101px; border: 1px solid #e2e8f0; padding-left: 16px; gap: 16px; }
.save { width: 116px; margin: 0 12px 0 13px; background: #d97706; color: #fff; justify-content: center; border: .5px solid #e7ad6b; }
.next { width: 94px; background: #cbced6; color: #fff; padding-left: 16px; gap: 15px; }

.taskbar { height: 40px; flex: none; display: flex; position: relative; background: linear-gradient(90deg, #303633, #342f2b 27%, #332f2d 48%, #25352f 54%, #252b2d 63%, #2b2b2b 80%, #302c25 92%, #272823); color: #fff; }
.start { width: 48px; display: grid; place-items: center; }
.search { width: 288px; border: 1px solid #c6c6c6; background: #f2f2f2; color: #292929; display: flex; align-items: center; padding-left: 11px; gap: 11px; font-size: 14.200px; }
.camera { margin-left: 50px; }
.apps { display: flex; width: 393px; }
.apps > span { position: relative; width: 49.300px; display: grid; place-items: center; }
.apps > .open::after { content: ""; position: absolute; left: 5px; right: 4px; bottom: 0; height: 2px; background: #76b9ed; }
.apps > .focused { background: #5c5a56; }
.apps > .focused::after { left: 0; right: 0; }
.focused b { position: absolute; left: 23px; top: 18px; width: 16px; height: 16px; border-radius: 50%; background: #00599c; font-size: 10px; font-weight: 400; line-height: 16px; text-align: center; }
.weather { margin-left: 202px; width: 132px; display: flex; align-items: center; gap: 8px; font-size: 13.900px; }
.tray { display: flex; align-items: center; }
.tray svg { width: 18px; height: 16px; margin: 0 3px; }
.lang { width: 24px; margin-left: 6px; display: flex; align-items: center; font-size: 11.900px; }
.clock { width: 60px; margin-left: 11px; display: flex; flex-direction: column; align-items: center; padding-top: 1px; font-size: 11.900px; }
.clock .fit { line-height: 18px; }
.notify { position: absolute; left: 1325px; top: 12px; }
.notify b { position: absolute; left: 7px; top: 7px; width: 17px; height: 17px; border-radius: 50%; border: 1px solid #8c8c8c; background: #343434; font-size: 11px; line-height: 15px; text-align: center; font-weight: 600; }
.peek { position: absolute; right: 4px; top: 3px; width: 1px; height: 37px; background: #666; }
</style>
